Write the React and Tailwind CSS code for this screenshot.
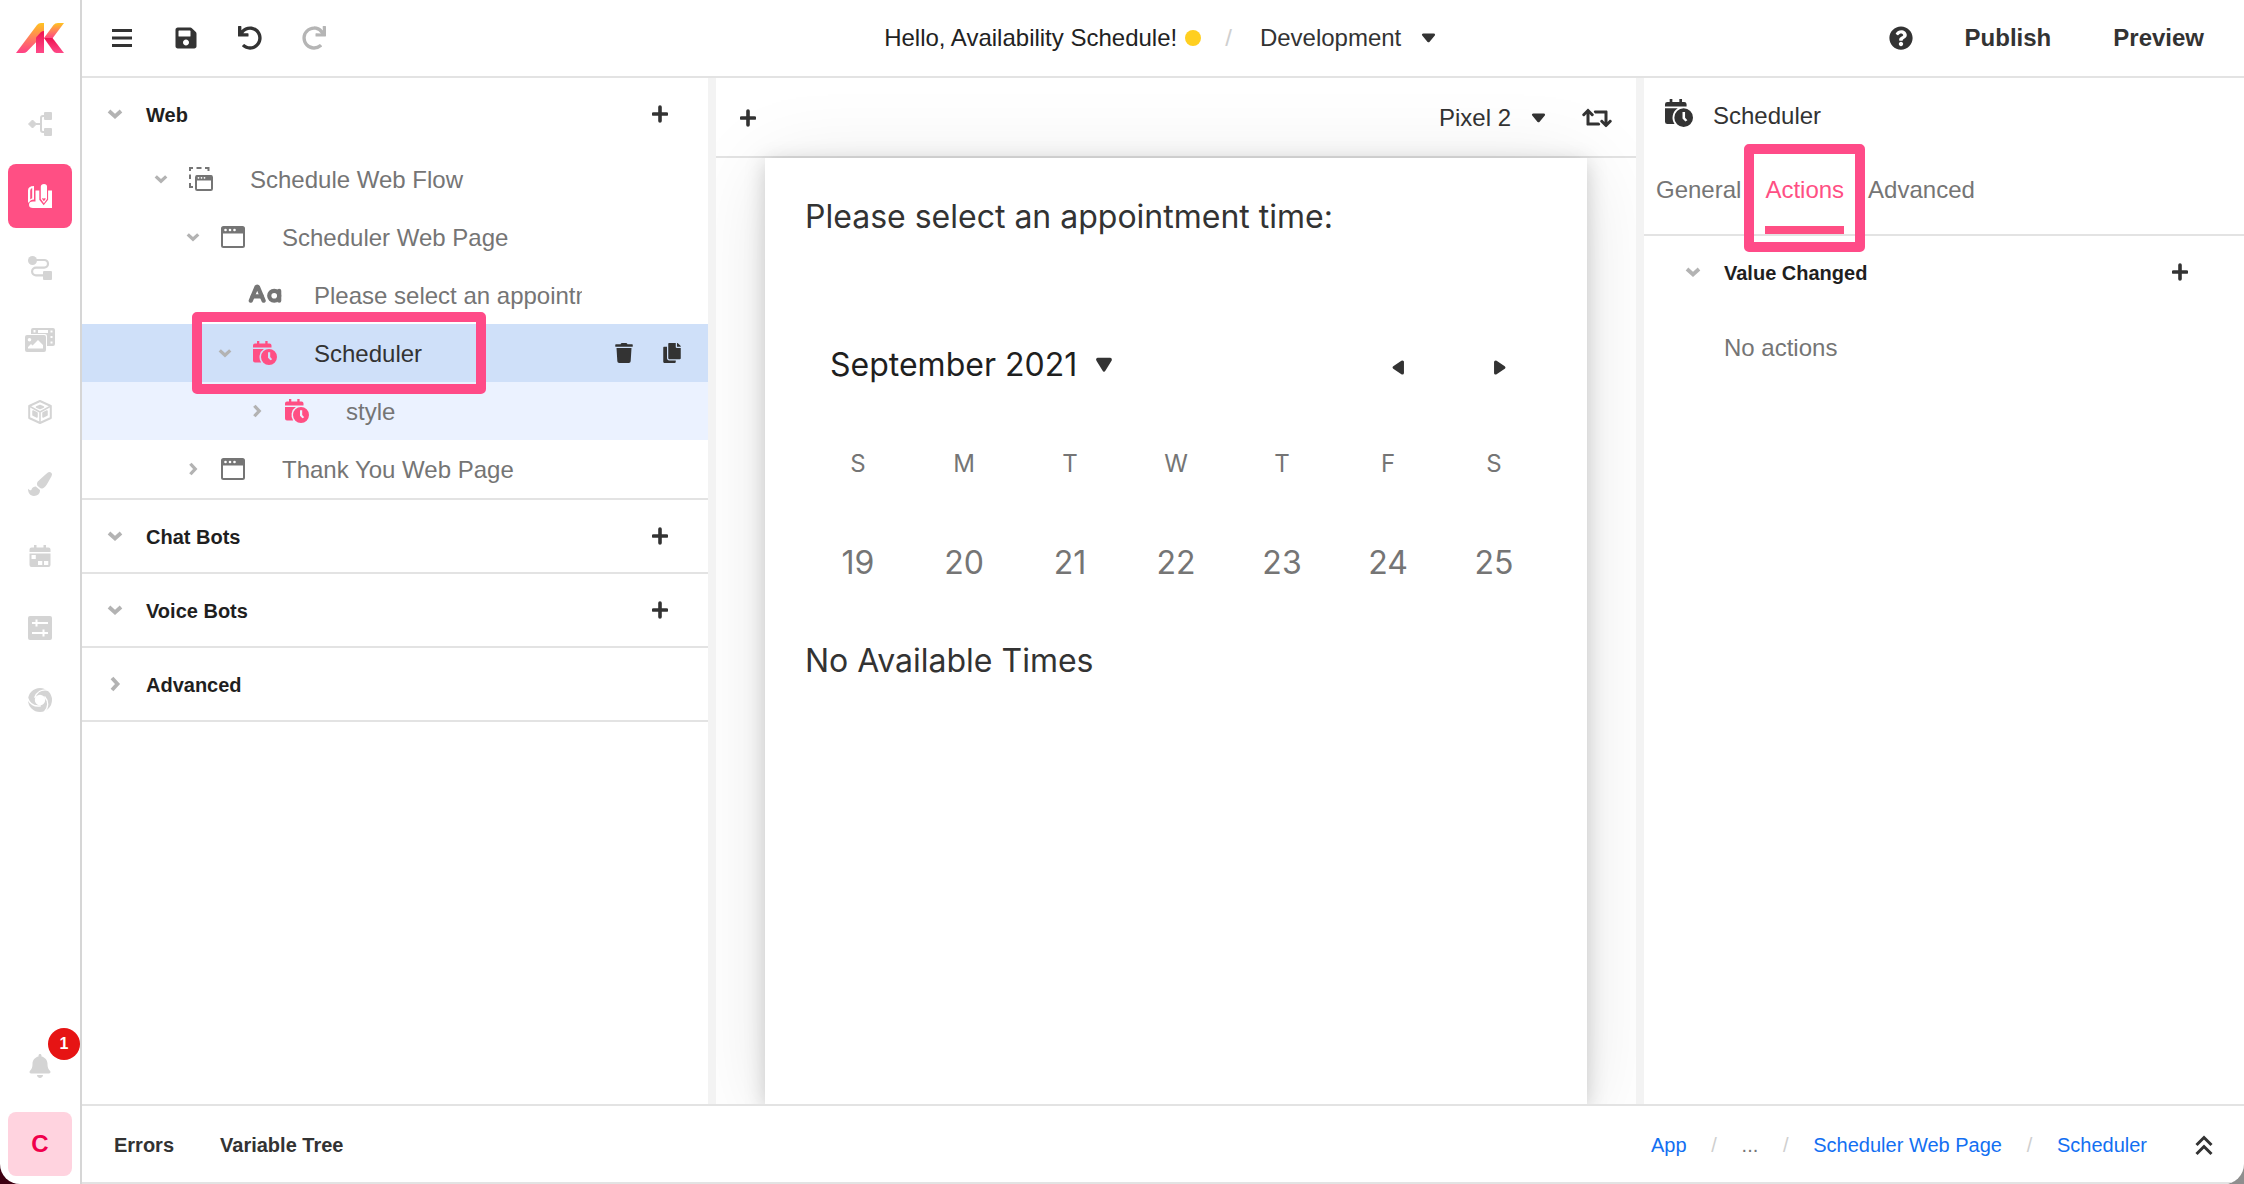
import React from "react";
import {
  FaUndo,
  FaRedo,
  FaSave,
  FaQuestionCircle,
  FaRetweet,
  FaTrash,
  FaCopy,
  FaBell,
  FaPaintBrush,
} from "react-icons/fa";
import { CaseSensitive } from "lucide-react";

/* ---------- icons ---------- */

function Logo() {
  return (
    <svg width="48" height="30" viewBox="0 0 48 30" aria-hidden="true">
      <defs>
        <linearGradient id="warm" x1="0" y1="0" x2="0" y2="1">
          <stop offset="0" stopColor="#ffc41f" />
          <stop offset="0.5" stopColor="#ff7f5c" />
          <stop offset="1" stopColor="#ff3f86" />
        </linearGradient>
        <linearGradient id="deep" x1="0" y1="0" x2="0" y2="1">
          <stop offset="0" stopColor="#ee1150" />
          <stop offset="1" stopColor="#ff4a88" />
        </linearGradient>
      </defs>
      <path d="M0 30 21 2Q22.500 0 25 0h3v11L11 28.500Q9.500 30 7 30z" fill="url(#warm)" />
      <path d="M20 14.500 25 9q1.500-1 3-1v22h-8z" fill="url(#deep)" />
      <path d="M48 0 36 16l-8-1L37.500 2Q39 0 42 0z" fill="url(#warm)" />
      <path d="M28 15l8.500 0L48 30h-7.500q-2 0-3.500-2z" fill="url(#deep)" />
    </svg>
  );
}

const Sitemap = () => (
  <svg width="24" height="24" viewBox="0 0 24 24" fill="currentColor" aria-hidden="true">
    <path d="M.500 12l4-4 4 4-4 4z" stroke="currentColor" strokeLinejoin="round" />
    <path d="M8 12h5M17 4h-2a2 2 0 0 0-2 2v12a2 2 0 0 0 2 2h2" fill="none" stroke="currentColor" strokeWidth="2" />
    <rect x="16" y="0" width="8" height="8" rx="1" />
    <rect x="16" y="16" width="8" height="8" rx="1" />
  </svg>
);

const Design = () => (
  <svg width="24" height="24" viewBox="0 0 24 24" fill="currentColor" aria-hidden="true">
    <path fillRule="evenodd" d="M0 6.500C0 3.500 2 2 6 2v13.500c-2.500 0-4 1-5 3H0zM2.200 6.800v8.700q1-1 2-1.200V4Q2.200 4.500 2.200 6.800z" />
    <path d="M7.500 6.500h3.800v9.300l4.400 5.400 4.400-5.400V6.500H24V24H5q-4 0-4-3.300Q1 17.500 5 17.500h2.500z" />
    <path fillRule="evenodd" d="M12.800 2.500Q13 0 16 0t3 2.500V15l-3.100 4.300L12.800 15zM14 14.800l1.900 2.400 1.900-2.400-.9-.9-1 .8-1-.8z" />
  </svg>
);

const Route = () => (
  <svg width="24" height="24" viewBox="0 0 24 24" fill="currentColor" aria-hidden="true">
    <circle cx="4.500" cy="4.500" r="4.500" />
    <rect x="15" y="15" width="9" height="9" rx="1" />
    <path d="M8 4h8.200a3.800 3.800 0 0 1 0 7.600H8a3.900 3.900 0 0 0 0 7.800h8" fill="none" stroke="currentColor" strokeWidth="2.200" />
  </svg>
);

const Media = () => (
  <svg width="30" height="24" viewBox="0 0 30 24" fill="currentColor" aria-hidden="true">
    <path
      fillRule="evenodd"
      d="M8 0h20a2 2 0 0 1 2 2v14a2 2 0 0 1-2 2h-6V8a2 2 0 0 0-2-2H6V2a2 2 0 0 1 2-2zM13 2v3h10V2zM8.500 2v2.500h2V2zM25.500 2.500v2h2v-2zM25.500 8v2h2V8zM25.500 13.500v2h2v-2z"
    />
    <path
      fillRule="evenodd"
      d="M2 7h17a2 2 0 0 1 2 2v13a2 2 0 0 1-2 2H2a2 2 0 0 1-2-2V9a2 2 0 0 1 2-2zM4.500 10a1.800 1.800 0 1 0 0 3.600 1.800 1.800 0 0 0 0-3.600zM3 20.500h15V17l-5-5-5.500 5.500-1.500-1.500-3 3z"
    />
  </svg>
);

const Cube = () => (
  <svg width="24" height="24" viewBox="0 0 24 24" fill="none" stroke="currentColor" strokeLinejoin="round" aria-hidden="true">
    <path d="M12 1 22.800 6v12L12 23 1.200 18V6z" strokeWidth="2" />
    <path d="M12 12v10M12 12 2 6.500M12 12l10-5.500" strokeWidth="1.500" />
    <path d="M12 5.500 15.500 7 12 8.500 8.500 7zM5 11l4 2v4l-4-2zM19 11l-4 2v4l4-2z" fill="currentColor" strokeWidth="1.500" />
  </svg>
);

const Calendar = () => (
  <svg width="22" height="22" viewBox="0 0 22 22" fill="currentColor" aria-hidden="true">
    <path d="M5 0h2.500v2.500h7V0H17v2.500h2.500a2 2 0 0 1 2 2V7H.500V4.500a2 2 0 0 1 2-2H5z" />
    <path fillRule="evenodd" d="M.500 8.500h21V20a2 2 0 0 1-2 2h-17a2 2 0 0 1-2-2zM2.500 10v4h4.300v-4zM9 16v4h4.300v-4zM15 16v4h4.300v-4z" />
  </svg>
);

const Sliders = () => (
  <svg width="24" height="24" viewBox="0 0 24 24" aria-hidden="true">
    <rect width="24" height="24" rx="2" fill="currentColor" />
    <path d="M4 7h16M8.500 3.500v7M4 17h16M15.500 13.500v7" stroke="#fff" strokeWidth="2" />
  </svg>
);

const Swirl = () => (
  <svg width="24" height="24" viewBox="-12 -12 24 24" fill="none" aria-hidden="true">
    <circle r="8.600" stroke="currentColor" strokeWidth="6.800" />
    {[0, 120, 240].map((angle) => (
      <path
        key={angle}
        transform={`rotate(${angle})`}
        d="M4.500-3.500C8.500 1 9 7 4 12.500"
        stroke="#fff"
        strokeWidth="1.500"
      />
    ))}
  </svg>
);

const CalendarClock = ({ size = 24 }) => (
  <svg width={size} height={size} viewBox="0 0 24 24" fill="currentColor" aria-hidden="true">
    <path d="M4 0h2.300v2.500h6V0h2.300v2.500h1.900a2 2 0 0 1 2 2v2H0v-2a2 2 0 0 1 2-2h2z" />
    <path d="M0 8h10.900a9.500 9.500 0 0 0-2.700 13.500H2a2 2 0 0 1-2-2z" />
    <path fillRule="evenodd" d="M16 8a8 8 0 1 1 0 16 8 8 0 0 1 0-16zM15 11.200v5.500l2.500 2.600 1.700-1-2-2.200v-4.900z" />
  </svg>
);

const WindowIcon = () => (
  <svg width="24" height="22" viewBox="0 0 24 22" aria-hidden="true">
    <rect x="1" y="1" width="22" height="20" rx="1.500" fill="none" stroke="currentColor" strokeWidth="2" />
    <path d="M1 1h22v6.500H1z" fill="currentColor" />
    <g fill="#fff">
      <circle cx="4.500" cy="4" r="1.300" />
      <circle cx="9" cy="4" r="1.300" />
      <circle cx="13.500" cy="4" r="1.300" />
    </g>
  </svg>
);

const FlowIcon = () => (
  <svg width="24" height="24" viewBox="0 0 24 24" aria-hidden="true">
    <path d="M0 1h4M7.500 1h5M16 1h4.500M1 0v4M1 7.500v4.500M1 16v5M0 20h4M19.500 0v4" fill="none" stroke="currentColor" strokeWidth="2" />
    <rect x="7" y="9" width="16" height="14" rx="1.200" fill="none" stroke="currentColor" strokeWidth="2" />
    <path d="M7 8.500h16v5H7z" fill="currentColor" />
    <g fill="#fff">
      <circle cx="9.500" cy="10.800" r="0.900" />
      <circle cx="12.500" cy="10.800" r="0.900" />
      <circle cx="15.500" cy="10.800" r="0.900" />
    </g>
  </svg>
);

const TextIcon = () => <CaseSensitive size={34} strokeWidth={3} aria-hidden="true" />;

const Plus = () => (
  <svg width="16" height="18" viewBox="0 0 16 18" aria-hidden="true">
    <path d="M1.500 9h13M8 2v14" stroke="currentColor" strokeWidth="3.600" strokeLinecap="round" />
  </svg>
);

const Bars = () => (
  <svg width="20" height="18" viewBox="0 0 20 18" aria-hidden="true">
    <path d="M0 1.500h20M0 9h20M0 16.500h20" stroke="currentColor" strokeWidth="3" />
  </svg>
);

const DoubleUp = () => (
  <svg width="18" height="22" viewBox="0 0 18 22" fill="none" aria-hidden="true">
    <path d="M1.500 11 9 3.500l7.500 7.500M1.500 20 9 12.500l7.500 7.500" stroke="currentColor" strokeWidth="3" />
  </svg>
);

function Chevron({ open, small }) {
  const size = small ? "size-[14px]" : "size-4";
  return (
    <svg className={`${size} ${open ? "" : "-rotate-90"}`} viewBox="0 0 16 16" aria-hidden="true">
      <path d="M2 5l6 5.500 6-5.500" fill="none" stroke="#b3b3b3" strokeWidth="3.800" />
    </svg>
  );
}

function Triangle({ className }) {
  return (
    <svg className={className} viewBox="0 0 16 12" preserveAspectRatio="none" fill="currentColor" aria-hidden="true">
      <path d="M2.500 2h11L8 9.500z" stroke="currentColor" strokeWidth="3" strokeLinejoin="round" />
    </svg>
  );
}

/* ---------- shared pieces ---------- */

const Highlight = ({ className }) => (
  <span className={`pointer-events-none absolute z-20 rounded-[5px] border-[10px] border-[#ff4b88] ${className}`} />
);

function Dropdown({ label, value }) {
  return (
    <label className="relative flex items-center">
      <span className="sr-only">{label}</span>
      <select className="h-12 appearance-none bg-transparent pr-12 text-2xl text-[#333] outline-none">
        <option>{value}</option>
      </select>
      <Triangle className="pointer-events-none absolute right-3.5 h-[10px] w-[15px]" />
    </label>
  );
}

/* ---------- side navigation ---------- */

const navItems = [
  { label: "Flows", icon: Sitemap },
  { label: "Design", icon: Design, active: true },
  { label: "Routes", icon: Route },
  { label: "Media", icon: Media },
  { label: "Models", icon: Cube },
  { label: "Theme", icon: () => <FaPaintBrush size={24} /> },
  { label: "Calendar", icon: Calendar },
  { label: "Settings", icon: Sliders },
  { label: "Integrations", icon: Swirl },
];

function SideNav() {
  return (
    <nav className="flex w-[82px] shrink-0 flex-col border-r-2 border-[#d6d6d6] px-2 pb-2">
      <a href="#home" aria-label="Home" className="flex h-[76px] items-center justify-center">
        <Logo />
      </a>
      <div className="mt-4 flex flex-col gap-2">
        {navItems.map(({ label, icon: Icon, active }) => (
          <button
            key={label}
            aria-label={label}
            className={`flex h-16 items-center justify-center rounded-lg ${active ? "bg-[#ff4f84] text-white" : "text-[#d4d4d4]"}`}
          >
            <Icon />
          </button>
        ))}
      </div>
      <div className="mt-auto flex flex-col gap-3.5">
        <button aria-label="Notifications" className="relative flex h-16 items-center justify-center text-[#d4d4d4]">
          <FaBell size={24} />
          <span className="absolute -right-2 -top-1.5 flex size-8 items-center justify-center rounded-full bg-[#e61414] text-base font-bold text-white">
            1
          </span>
        </button>
        <button className="flex h-16 items-center justify-center rounded-lg bg-[#ffd3df] text-2xl font-bold text-[#f0004c]">
          C
        </button>
      </div>
    </nav>
  );
}

/* ---------- top bar ---------- */

function TopBar() {
  return (
    <header className="flex h-[78px] shrink-0 items-center border-b-2 border-[#e3e3e3] text-2xl">
      <div className="flex flex-1 items-center pl-2">
        <button aria-label="Menu" className="flex h-16 w-16 items-center justify-center"><Bars /></button>
        <button aria-label="Save" className="flex h-16 w-16 items-center justify-center"><FaSave size={24} /></button>
        <button aria-label="Undo" className="flex h-16 w-16 items-center justify-center"><FaUndo size={24} /></button>
        <button aria-label="Redo" className="flex h-16 w-16 items-center justify-center text-[#b5b5b5]"><FaRedo size={24} /></button>
      </div>
      <div className="flex items-center pl-10">
        <h1 className="text-[#222]">Hello, Availability Schedule!</h1>
        <span className="ml-2 size-4 rounded-full bg-[#ffcf20]" />
        <span className="ml-6 mr-7 text-[#cfcfcf]">/</span>
        <Dropdown label="Environment" value="Development" />
      </div>
      <div className="flex flex-1 items-center justify-end pr-10">
        <button aria-label="Help" className="mr-[52px]"><FaQuestionCircle size={24} /></button>
        <button className="mr-[62px] font-bold">Publish</button>
        <button className="font-bold">Preview</button>
      </div>
    </header>
  );
}

/* ---------- tree panel ---------- */

const treeRows = [
  { label: "Schedule Web Flow", icon: FlowIcon, indent: "pl-[67px]", open: true },
  { label: "Scheduler Web Page", icon: WindowIcon, indent: "pl-[99px]", open: true },
  { label: "Please select an appointment time:", icon: TextIcon, indent: "pl-[131px]", leaf: true },
  { label: "Scheduler", icon: CalendarClock, indent: "pl-[131px]", open: true, selected: true, pink: true },
  { label: "style", icon: CalendarClock, indent: "pl-[163px]", pink: true, tinted: true },
  { label: "Thank You Web Page", icon: WindowIcon, indent: "pl-[99px]" },
];

function TreeRow({ label, icon: Icon, indent, open, leaf, selected, pink, tinted }) {
  const bg = selected ? "bg-[#cfe0f9]" : tinted ? "bg-[#ebf2ff]" : "";
  return (
    <li className={`relative flex h-[58px] items-center ${indent} ${bg}`}>
      <span className="flex w-6 shrink-0 justify-center">
        {!leaf && (
          <button aria-label={`Toggle ${label}`}><Chevron open={open} small /></button>
        )}
      </span>
      <span className={`ml-4 flex w-6 shrink-0 justify-center ${pink ? "text-[#ff4f84]" : "text-[#757575]"}`}>
        <span className="shrink-0"><Icon /></span>
      </span>
      <span className={`ml-[37px] min-w-0 flex-1 overflow-hidden whitespace-nowrap pt-0.5 text-2xl ${selected ? "text-[#333]" : "text-[#757575]"}`}>
        {label}
      </span>
      <span className="flex w-[126px] shrink-0 items-center justify-end pr-3">
        {selected && (
          <>
            <button aria-label="Delete" className="flex w-12 justify-center"><FaTrash size={20} /></button>
            <button aria-label="Duplicate" className="flex w-12 justify-center"><FaCopy size={20} /></button>
          </>
        )}
      </span>
      {selected && <Highlight className="-top-3 left-[110px] h-[82px] w-[294px]" />}
    </li>
  );
}

function SectionHeader({ title, open, add = true }) {
  return (
    <div className="flex h-[72px] items-center pl-[25px] pr-10">
      <button aria-label={`Toggle ${title}`}><Chevron open={open} /></button>
      <h2 className="ml-[23px] flex-1 pt-0.5 text-xl font-bold text-[#1f1f1f]">{title}</h2>
      {add && <button aria-label={`Add to ${title}`}><Plus /></button>}
    </div>
  );
}

function TreePanel() {
  return (
    <aside className="w-[626px] shrink-0 overflow-hidden">
      <section className="border-b-2 border-[#e3e3e3]">
        <SectionHeader title="Web" open />
        <ul>
          {treeRows.map((row) => (
            <TreeRow key={row.label} {...row} />
          ))}
        </ul>
      </section>
      <section className="border-b-2 border-[#e3e3e3]"><SectionHeader title="Chat Bots" open /></section>
      <section className="border-b-2 border-[#e3e3e3]"><SectionHeader title="Voice Bots" open /></section>
      <section className="border-b-2 border-[#e3e3e3]"><SectionHeader title="Advanced" add={false} /></section>
    </aside>
  );
}

/* ---------- canvas ---------- */

const weekdays = ["S", "M", "T", "W", "T", "F", "S"];
const days = [19, 20, 21, 22, 23, 24, 25];

function Canvas() {
  return (
    <main className="flex min-w-0 flex-1 flex-col overflow-hidden border-x-8 border-[#f3f3f3]">
      <div className="flex h-20 shrink-0 items-center border-b-2 border-[#e3e3e3] px-6 pt-0.5">
        <button aria-label="Add component"><Plus /></button>
        <div className="ml-auto flex items-center">
          <Dropdown label="Device" value="Pixel 2" />
          <button aria-label="Rotate device" className="ml-[22px]"><FaRetweet size={30} /></button>
        </div>
      </div>
      <div className="relative mx-auto w-[822px] flex-1 bg-white px-10 pt-[37px] font-['Inter',sans-serif] text-[32px] leading-[44px] text-[#333] shadow-[0_4px_20px_rgba(0,0,0,0.18),0_10px_80px_rgba(0,0,0,0.1)]">
        <p>Please select an appointment time:</p>
        <div className="mt-[104px] flex items-center pl-[25px] pr-[38px]">
          <button className="flex items-center gap-[18px] text-[#1f1f1f]">
            September 2021
            <Triangle className="h-4 w-[18px] text-[#333]" />
          </button>
          <button aria-label="Previous week" className="ml-auto flex w-[18px] justify-center pt-1">
            <Triangle className="h-[13px] w-4 rotate-90" />
          </button>
          <button aria-label="Next week" className="ml-[84px] flex w-[18px] justify-center pt-1">
            <Triangle className="h-[13px] w-4 -rotate-90" />
          </button>
        </div>
        <table className="mt-[55px] w-full table-fixed text-center text-[#757575]">
          <thead>
            <tr>
              {weekdays.map((day, i) => (
                <th key={i} scope="col" className="h-[44px] p-0 text-center text-2xl font-normal">{day}</th>
              ))}
            </tr>
          </thead>
          <tbody>
            <tr>
              {days.map((day) => (
                <td key={day} className="p-0 pt-[55px]">
                  <button>{day}</button>
                </td>
              ))}
            </tr>
          </tbody>
        </table>
        <p className="mt-[54px]">No Available Times</p>
      </div>
    </main>
  );
}

/* ---------- properties panel ---------- */

function Properties() {
  return (
    <aside className="w-[600px] shrink-0">
      <div className="flex h-[74px] items-center gap-5 pl-[21px] text-2xl">
        <span className="pb-1"><CalendarClock size={28} /></span>
        <h2 className="pt-0.5">Scheduler</h2>
      </div>
      <div role="tablist" className="flex h-[84px] gap-6 border-b-2 border-[#e3e3e3] pl-3 text-2xl text-[#757575]">
        <button role="tab" aria-selected="false" className="pb-1.5">General</button>
        <button role="tab" aria-selected="true" className="relative border-b-8 border-[#ff4f84] pt-0.5 text-[#ff4f84]">
          Actions
          <Highlight className="-inset-x-[21px] -top-2 h-[108px]" />
        </button>
        <button role="tab" aria-selected="false" className="pb-1.5">Advanced</button>
      </div>
      <div className="flex h-[72px] items-center pl-[41px] pr-14">
        <button aria-label="Toggle Value Changed"><Chevron open /></button>
        <h3 className="ml-[23px] flex-1 pt-0.5 text-xl font-bold text-[#1f1f1f]">Value Changed</h3>
        <button aria-label="Add action"><Plus /></button>
      </div>
      <p className="pl-20 pt-6 text-2xl text-[#757575]">No actions</p>
    </aside>
  );
}

/* ---------- footer ---------- */

const Slash = () => <span className="w-[55px] text-center text-[#cfcfcf]">/</span>;

function Footer() {
  return (
    <footer className="flex h-20 shrink-0 items-center border-y-2 border-[#e3e3e3] pl-8 pr-[31px] pt-0.5 text-xl">
      <button className="font-bold">Errors</button>
      <button className="ml-[46px] font-bold">Variable Tree</button>
      <nav aria-label="Breadcrumb" className="ml-auto flex items-center text-[#136ff2]">
        <a href="#app">App</a>
        <Slash />
        <span className="text-[#757575]">...</span>
        <Slash />
        <a href="#page">Scheduler Web Page</a>
        <Slash />
        <a href="#scheduler">Scheduler</a>
      </nav>
      <button aria-label="Expand panel" className="ml-12"><DoubleUp /></button>
    </footer>
  );
}

export default function App() {
  return (
    <div className="h-screen bg-linear-to-r from-[#3d0012] to-[#8f8f8f] font-['Liberation_Sans',Arial,sans-serif] text-[#333]">
      <div className="flex h-full overflow-hidden rounded-b-[20px] bg-white">
        <SideNav />
        <div className="flex min-w-0 flex-1 flex-col">
          <TopBar />
          <div className="flex min-h-0 flex-1">
            <TreePanel />
            <Canvas />
            <Properties />
          </div>
          <Footer />
        </div>
      </div>
    </div>
  );
}
